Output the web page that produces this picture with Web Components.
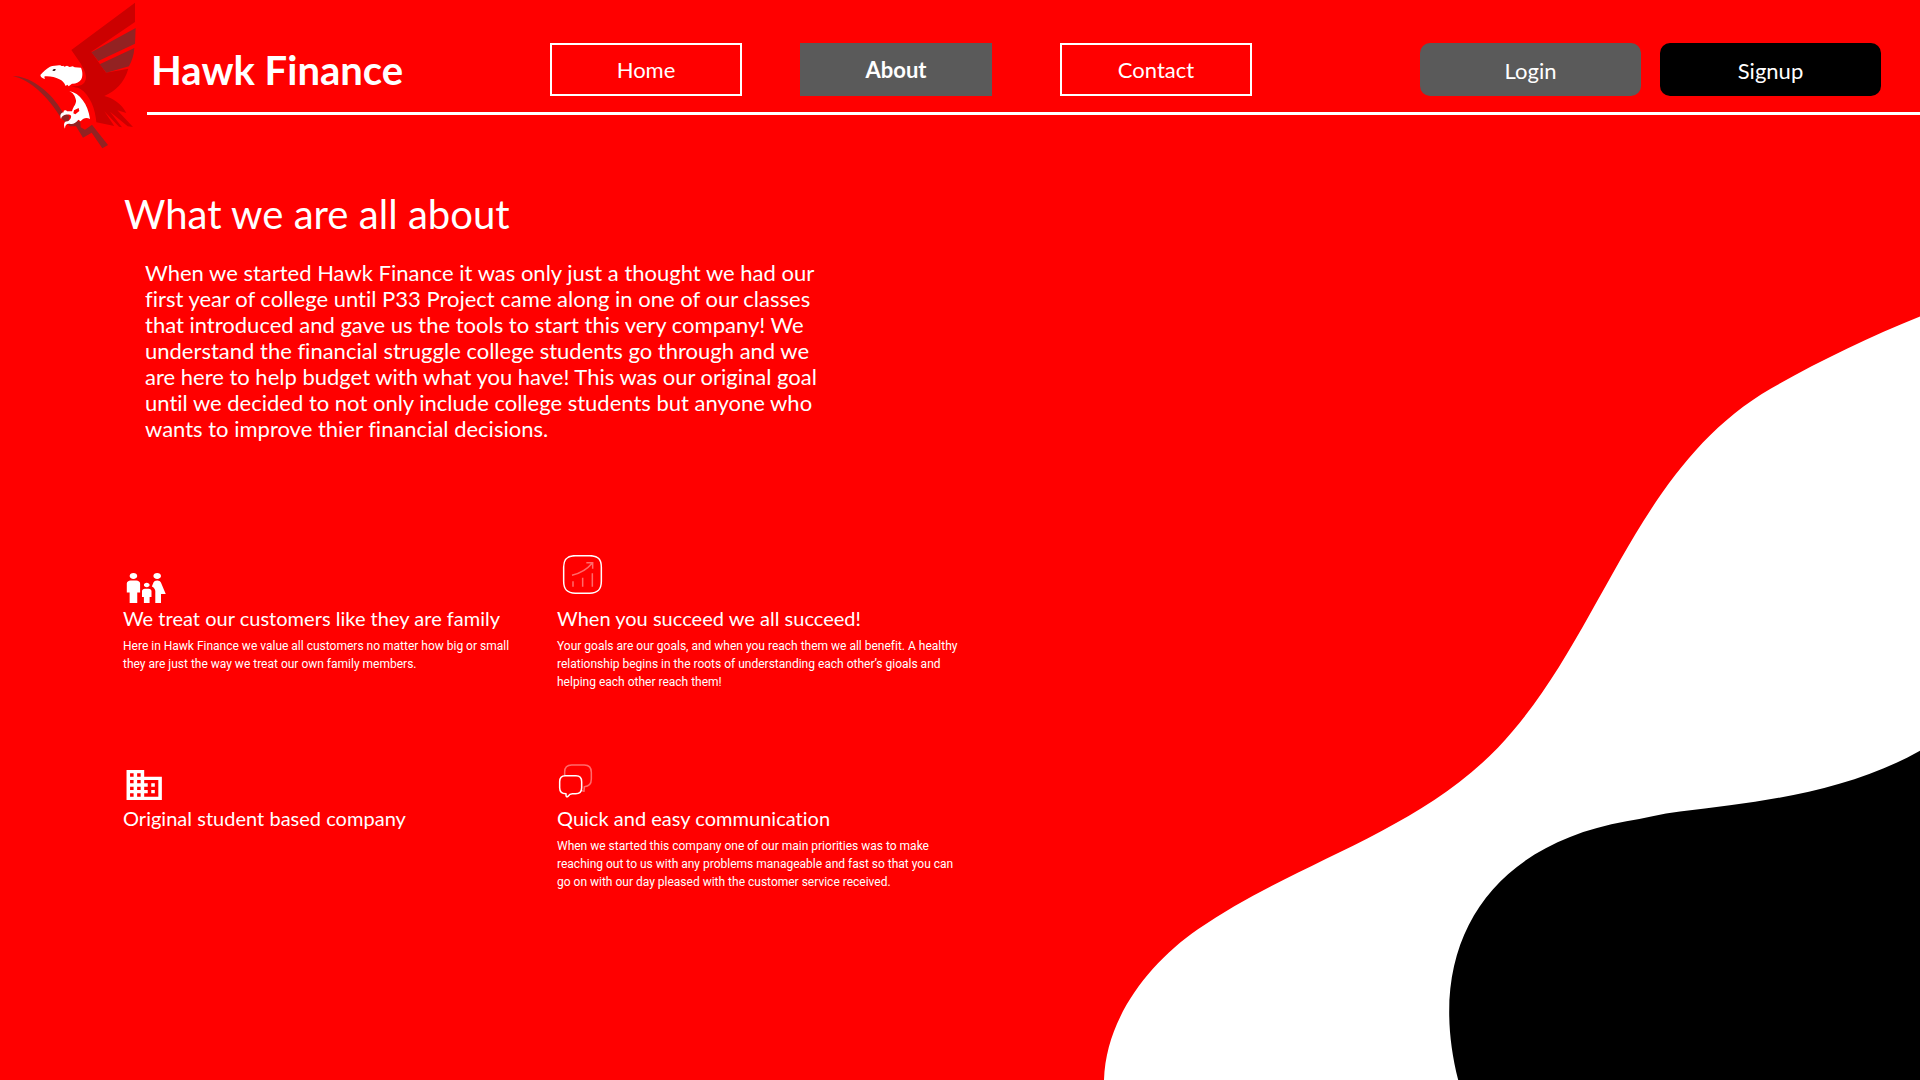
<!DOCTYPE html>
<html lang="en">
<head>
<meta charset="utf-8">
<title>Hawk Finance - About</title>
<style>
html, body { margin: 0; height: 100%; background: #f00; overflow: hidden; }
body { font-family: Lato, "Liberation Sans", sans-serif; color: #fff; font-variant-ligatures: none; }
</style>
</head>
<body>
<about-page></about-page>

<template id="page-tpl">
<style>
:host { display: flex; flex-direction: column; position: relative; width: 1920px; height: 1080px; overflow: hidden; background: #f00; }
main { display: flex; flex-direction: column; position: relative; padding: 75px 0 0 123px; }
h1 { margin: 0 0 0 1px; font-weight: 400; font-size: 40px; line-height: 48px; letter-spacing: .03px; }
.intro { margin: 22px 0 0 22px; width: 680px; font-size: 22px; line-height: 26px; }
.grid { display: grid; grid-template-columns: 402px 402px; column-gap: 32px; grid-auto-rows: 200px; margin-top: 113px; }
</style>
<wave-backdrop></wave-backdrop>
<site-header></site-header>
<main>
<h1>What we are all about</h1>
<div class="intro">When we started Hawk Finance it was only just a thought we had our first year of college until P33 Project came along in one of our classes that introduced and gave us the tools to start this very company! We understand the financial struggle college students go through and we are here to help budget with what you have! This was our original goal until we decided to not only include college students but anyone who wants to improve thier financial decisions.</div>
<div class="grid">
<feature-card>
<svg slot="icon" width="45.6" height="36" viewBox="0 0 24 24" preserveAspectRatio="none" fill="#fff"><path d="M16 4c0-1.11.89-2 2-2s2 .89 2 2-.89 2-2 2-2-.89-2-2zm4 18v-6h2.500l-2.540-7.630C19.680 7.550 18.920 7 18.060 7h-.12c-.86 0-1.630.55-1.900 1.370l-.86 2.580c1.080.6 1.820 1.730 1.820 3.050v8h3zm-7.500-10.500c.83 0 1.500-.67 1.500-1.500s-.67-1.500-1.500-1.500S11 9.170 11 10s.67 1.500 1.500 1.500zM5.500 6c1.110 0 2-.89 2-2s-.89-2-2-2-2 .89-2 2 .89 2 2 2zm2 16v-7H9V9c0-1.100-.9-2-2-2H4c-1.100 0-2 .9-2 2v6h1.500v7h4zm6.500 0v-4h1v-4c0-.82-.68-1.500-1.500-1.500h-2c-.82 0-1.500.68-1.500 1.500v4h1v4h3z"/></svg>
<span slot="title">We treat our customers like they are family</span>
<span slot="text">Here in Hawk Finance we value all customers no matter how big or small they are just the way we treat our own family members.</span>
</feature-card>
<feature-card>
<svg slot="icon" width="46" height="51" viewBox="51 45 138 153" fill="none" stroke="#fff"><path stroke-width="4.5" d="M106 47H149C175 47 184 58 184 82V124C184 149 174 159.500 149 159.500H106C81 159.500 71 149 71 124V82C71 58 81 47 106 47Z"/><g stroke-width="4.5" opacity=".42"><path d="M99 124V140M128 113V140M157 100V140M96 106Q135 96 157 69M139 68.500H158V86"/></g></svg>
<span slot="title">When you succeed we all succeed!</span>
<span slot="text">Your goals are our goals, and when you reach them we all benefit. A healthy relationship begins in the roots of understanding each other’s gioals and helping each other reach them!</span>
</feature-card>
<feature-card>
<svg slot="icon" width="42.4" height="41" viewBox="0 0 24 24.6" preserveAspectRatio="none" fill="#fff"><path d="M12 7V3H2v18h20V7H12zM6 19H4v-2h2v2zm0-4H4v-2h2v2zm0-4H4V9h2v2zm0-4H4V5h2v2zm4 12H8v-2h2v2zm0-4H8v-2h2v2zm0-4H8V9h2v2zm0-4H8V5h2v2zm10 12h-8v-2h2v-2h-2v-2h2v-2h-2V9h8v10zm-2-8h-2v2h2v-2zm0 4h-2v2h2v-2z"/></svg>
<span slot="title">Original student based company</span>
</feature-card>
<feature-card>
<svg slot="icon" width="46" height="51" viewBox="51 15 138 153" fill="none" stroke="#fff" stroke-linejoin="round"><path stroke-width="4.5" opacity=".42" d="M74 77V66Q74 45 95 45H133Q154 45 154 67V87Q154 109 133 110L132 124L124 121"/><path stroke-width="4.500" d="M76 77H108Q125 77 125 95V113Q125 131 107 131H97Q89 131 84 139Q79 143 78 136V131Q59 131 59 113V95Q59 77 76 77Z"/></svg>
<span slot="title">Quick and easy communication</span>
<span slot="text">When we started this company one of our main priorities was to make reaching out to us with any problems manageable and fast so that you can go on with our day pleased with the customer service received.</span>
</feature-card>
</div>
</main>
</template>

<template id="header-tpl">
<style>
:host { display: flex; position: relative; height: 115px; }
hawk-logo { flex: 0 0 147px; min-width: 0; }
.bar { flex: 1; box-sizing: border-box; display: flex; align-items: flex-start; padding: 43px 39px 0 4px; border-bottom: 3px solid #fff; }
.brand { width: 399px; font-size: 40px; font-weight: 700; line-height: 48px; padding-top: 3px; }
nav { display: flex; }
nav-link:nth-child(2) { margin: 0 68px 0 58px; }
.account { display: flex; gap: 19px; margin-left: auto; }
</style>
<hawk-logo></hawk-logo>
<div class="bar">
<div class="brand">Hawk Finance</div>
<nav><nav-link>Home</nav-link><nav-link current>About</nav-link><nav-link>Contact</nav-link></nav>
<div class="account"><account-button>Login</account-button><account-button primary>Signup</account-button></div>
</div>
</template>

<template id="hawk-tpl">
<style>:host { display: block; } svg { display: block; width: 160px; height: 160px; }</style>
<svg viewBox="0 0 480 480">
<path fill="#cc0000" d="M405 8V66L274 155L318 218L385 206C372 250 346 272 313 288C340 294 365 312 379 339L352 331L399 381L383 379L330 335L366 382L357 380L313 334L343 378L289 367C287 330 270 283 240 266C232 261 222 263 213 257C236 263 258 254 258 232C257 214 248 204 243 192L214 150Z"/>
<path fill="#932222" d="M274 157L407 84L405 131L295 183ZM299 193L403 144C402 164 396 182 387 199L319 218Z"/>
<path fill="#932222" d="M38 228C86 228 150 268 190 340L196 338L209 350L206 357L217 366L226 360L241 367L242 382L255 389L276 374L324 435L307 445L275 398L249 413L228 379H210L184 355C146 292 92 240 38 228Z"/>
<path fill="#fff" d="M121 225C129 215 139 207 150 200C158 196 170 198 177 196C183 194 184 200 190 197L193 200L201 197L209 201L218 199L224 202L243 203C248 214 249 230 243 239C236 248 225 252 216 251L206 259L202 254L197 258C192 248 187 241 178 238C166 232 151 228 136 229C132 228 133 233 135 237C129 235 122 233 121 225Z"/>
<path fill="#200" d="M157 211Q161 206 167 207Q167 213 162 213Q159 213 157 211Z"/>
<path fill="#fff" fill-rule="evenodd" d="M208 273C239 279 264 312 270 357C261 352 251 352 242 364L235 359C228 368 219 374 209 371C200 370 195 375 195 386C189 373 193 362 204 364C213 357 216 349 211 345C202 342 187 343 183 357C178 344 184 337 192 337C187 330 199 329 201 334L216 334C220 318 229 314 228 301C225 286 218 278 208 273ZM222 331L236 324L238 333L226 343L220 340Z"/>
</svg>
</template>

<script>
const define = (name, html) => customElements.define(name, class extends HTMLElement {
  constructor() {
    super();
    const root = this.attachShadow({ mode: 'open' });
    const source = document.getElementById(html);
    if (source) root.append(source.content.cloneNode(true));
    else root.innerHTML = html;
  }
});

define('hawk-logo', 'hawk-tpl');
define('nav-link', `<style>
:host { display: flex; align-items: center; justify-content: center; box-sizing: border-box; width: 192px; height: 53px; border: 2px solid #fff; font-size: 22px; line-height: 26px; }
:host([current]) { background: #5a5a5a; border-color: #5a5a5a; font-weight: 700; }
</style><slot></slot>`);
define('account-button', `<style>
:host { display: flex; align-items: center; justify-content: center; box-sizing: border-box; width: 221px; height: 53px; padding-top: 2px; border-radius: 10px; background: #5a5a5a; font-size: 22px; line-height: 26px; }
:host([primary]) { background: #000; }
</style><slot></slot>`);
define('feature-card', `<style>
:host { display: flex; flex-direction: column; }
.icon { display: flex; align-items: flex-end; height: 51px; }
h2 { margin: 0; font-size: 20px; font-weight: 400; line-height: 24px; letter-spacing: .02px; white-space: nowrap; }
p { margin: 7px 0 0; font-family: Roboto, "Liberation Sans", sans-serif; font-size: 12px; line-height: 18px; }
</style><div class="icon"><slot name="icon"></slot></div><h2><slot name="title"></slot></h2><p><slot name="text"></slot></p>`);
define('wave-backdrop', `<style>:host { display: block; position: absolute; inset: 0; } svg { display: block; }</style>
<svg width="1920" height="1080" viewBox="0 0 1920 1080">
<path fill="#fff" d="M1920 316.500C1869 337 1817 362 1771 388.500C1633.400 468.200 1602.600 637.900 1497.900 747.700C1414.600 834.100 1295 862 1197.900 929.300C1148.400 963.600 1105.900 1018.500 1104 1080H1920Z"/>
<path d="M1920 750.700C1847.200 792 1761.700 801.700 1680 811.400C1661 813.700 1643.500 818.300 1626.400 821.300C1487.800 845.800 1424.200 946.100 1458.200 1080H1920Z"/>
</svg>`);
define('site-header', 'header-tpl');
define('about-page', 'page-tpl');
</script>
</body>
</html>
